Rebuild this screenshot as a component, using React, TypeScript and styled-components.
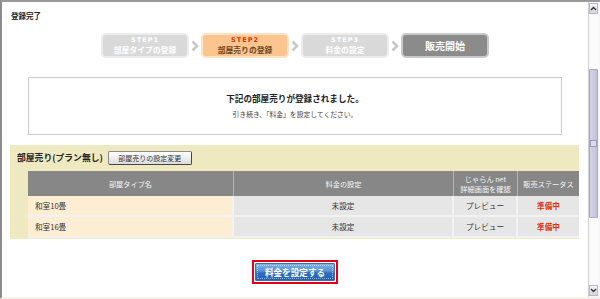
import React from "react";
import styled, { createGlobalStyle } from "styled-components";

const GlobalStyle = createGlobalStyle`
  html, body {
    margin: 0;
    padding: 0;
    background: #fff;
  }
  body {
    font-family: "Noto Sans CJK JP", "Noto Sans", sans-serif;
    color: #333;
  }
`;

const Frame = styled.div`
  width: 600px;
  height: 299px;
  box-sizing: border-box;
  border-top: 2px solid #9a9a9a;
  border-left: 2px solid #8c8c8c;
  border-bottom: 2px solid #f2f2ea;
  display: flex;
  overflow: hidden;
`;

const Main = styled.div`
  flex: 1;
  min-width: 0;
  display: flex;
  flex-direction: column;
`;

const PageTitle = styled.h1`
  margin: 0;
  padding: 7px 0 0 9px;
  font-size: 7.5px;
  line-height: 14px;
  font-weight: bold;
  color: #222;
`;

const Steps = styled.div`
  display: flex;
  justify-content: center;
  align-items: center;
  gap: 2px;
  margin-top: 10px;
`;

type StepKind = "off" | "on" | "end";

const stepColors: Record<StepKind, { bg: string; border: string; label: string; name: string }> = {
  off: { bg: "#d9d9d9", border: "#ececec", label: "#fff", name: "#fff" },
  on: { bg: "#fcc48e", border: "#fde2c4", label: "#d5380c", name: "#6b4420" },
  end: { bg: "#8b8b8b", border: "#c9c9c9", label: "#fff", name: "#fff" },
};

const StepBox = styled.div<{ $kind: StepKind }>`
  width: 88px;
  height: 25px;
  box-sizing: border-box;
  border-radius: 5px;
  border: 2px solid ${(p) => stepColors[p.$kind].border};
  background: ${(p) => stepColors[p.$kind].bg};
  display: flex;
  flex-direction: column;
  align-items: center;
  justify-content: center;
  gap: 1px;
`;

const StepLabel = styled.span<{ $kind: StepKind }>`
  font-family: "DejaVu Sans", sans-serif;
  font-size: 6.5px;
  line-height: 8px;
  font-weight: bold;
  letter-spacing: 1px;
  color: ${(p) => stepColors[p.$kind].label};
`;

const StepName = styled.span<{ $kind: StepKind; $big?: boolean }>`
  font-size: ${(p) => (p.$big ? "10px" : "7.8px")};
  line-height: ${(p) => (p.$big ? "14px" : "10px")};
  font-weight: bold;
  color: ${(p) => stepColors[p.$kind].name};
`;

const Chevron = () => (
  <svg width="8" height="12" viewBox="0 0 8 12">
    <polyline
      points="1.5,1.5 6,6 1.5,10.5"
      fill="none"
      stroke="#c8c8c8"
      strokeWidth="2.6"
    />
  </svg>
);

const MessageBox = styled.div`
  margin: 19px 26px 0;
  height: 58px;
  box-sizing: border-box;
  border: 1px solid #cccccc;
  padding-top: 13px;
  text-align: center;
`;

const MessageTitle = styled.p`
  margin: 0;
  font-size: 8.6px;
  line-height: 14px;
  font-weight: bold;
  color: #222;
`;

const MessageText = styled.p`
  margin: 3px 0 0;
  font-size: 6.8px;
  line-height: 12px;
  color: #444;
`;

const Section = styled.div`
  margin: 10px 9px 0 8px;
  background: #efe9c2;
  padding: 6px 0 1px;
`;

const SectionHead = styled.div`
  display: flex;
  align-items: center;
  gap: 5px;
  padding-left: 7px;
  height: 14px;
`;

const SectionTitle = styled.h2`
  margin: 0;
  font-size: 8.8px;
  line-height: 14px;
  font-weight: bold;
  color: #222;
`;

const SmallButton = styled.button`
  width: 84px;
  height: 14px;
  padding: 0;
  box-sizing: border-box;
  border: 1px solid #8a8a8a;
  border-right-color: #444;
  border-bottom-color: #444;
  border-radius: 2px;
  background: linear-gradient(#ffffff, #dcdcdc);
  font-family: inherit;
  font-size: 7px;
  line-height: 12px;
  color: #333;
`;

const Table = styled.table`
  margin: 6px 0 0 18px;
  width: 551px;
  table-layout: fixed;
  border-collapse: separate;
  border-spacing: 0;
`;

const HeadCell = styled.th`
  height: 25px;
  padding: 0;
  background: #878787;
  color: #f4f4f4;
  font-size: 7.2px;
  line-height: 10px;
  font-weight: normal;
  text-align: center;
  border-right: 1px solid #b4b4b4;
  &:last-child {
    border-right: none;
  }
`;

const Cell = styled.td<{ $name?: boolean; $status?: boolean }>`
  height: 19px;
  padding: 0 ${(p) => (p.$name ? "7px" : "0")};
  background: ${(p) => (p.$name ? "#fdedd3" : "#e6e6e6")};
  border-right: 2px solid #f2f2f2;
  border-bottom: 2px solid #f2f2f2;
  font-size: 7.6px;
  line-height: 12px;
  text-align: ${(p) => (p.$name ? "left" : "center")};
  color: ${(p) => (p.$status ? "#e03000" : "#333")};
  font-weight: ${(p) => (p.$status ? "bold" : "normal")};
  &:last-child {
    border-right: none;
  }
`;

const ActionRow = styled.div`
  display: flex;
  justify-content: center;
  margin-top: 21px;
`;

const ActionFrame = styled.div`
  border: 2px solid #e60012;
  padding: 1px;
`;

const BlueButton = styled.button`
  display: block;
  width: 80px;
  height: 18px;
  padding: 0;
  border: 1px solid #3a70b0;
  border-radius: 1px;
  background: linear-gradient(#7db2e6 0%, #5593d6 45%, #2f6fbe 55%, #2262b2 100%);
  color: #fff;
  font-family: inherit;
  font-size: 8.6px;
  line-height: 16px;
  font-weight: bold;
  outline: 1px dotted rgba(255, 255, 255, 0.5);
  outline-offset: -3px;
`;

const Scrollbar = styled.div`
  width: 12px;
  box-sizing: border-box;
  border-left: 1px solid #d0d0d0;
  padding-right: 2px;
  display: flex;
  flex-direction: column;
  background: #f8f8f8;
`;

const ScrollButton = styled.div`
  height: 11px;
  margin: 1px 0;
  box-sizing: border-box;
  border: 1px solid #b8b8c8;
  background: linear-gradient(#f6f6fa, #d6d6e2);
  display: flex;
  align-items: center;
  justify-content: center;
`;

const Track = styled.div`
  flex: 1;
  display: flex;
  flex-direction: column;
  background: #fbfbfb;
`;

const Thumb = styled.div`
  margin-top: 54px;
  height: 149px;
  box-sizing: border-box;
  border: 1px solid #a9a9c6;
  border-radius: 1px;
  background: linear-gradient(90deg, #d4d4e6, #c2c2da);
  display: flex;
  align-items: center;
  justify-content: center;
`;

const Grip = styled.div`
  width: 5px;
  height: 5px;
  border: 1px solid #9c9cba;
  background: #dcdcea;
`;

const ScrollArrow = ({ up }: { up?: boolean }) => (
  <svg width="7" height="5" viewBox="0 0 7 5">
    <polyline
      points={up ? "1,4 3.5,1.5 6,4" : "1,1 3.5,3.5 6,1"}
      fill="none"
      stroke="#333"
      strokeWidth="1.4"
    />
  </svg>
);

const rooms = ["和室10畳", "和室16畳"];

export default function App() {
  return (
    <>
      <GlobalStyle />
      <Frame>
        <Main>
          <PageTitle>登録完了</PageTitle>

          <Steps>
            <StepBox $kind="off">
              <StepLabel $kind="off">STEP1</StepLabel>
              <StepName $kind="off">部屋タイプの登録</StepName>
            </StepBox>
            <Chevron />
            <StepBox $kind="on">
              <StepLabel $kind="on">STEP2</StepLabel>
              <StepName $kind="on">部屋売りの登録</StepName>
            </StepBox>
            <Chevron />
            <StepBox $kind="off">
              <StepLabel $kind="off">STEP3</StepLabel>
              <StepName $kind="off">料金の設定</StepName>
            </StepBox>
            <Chevron />
            <StepBox $kind="end">
              <StepName $kind="end" $big>
                販売開始
              </StepName>
            </StepBox>
          </Steps>

          <MessageBox>
            <MessageTitle>下記の部屋売りが登録されました。</MessageTitle>
            <MessageText>引き続き、「料金」を設定してください。</MessageText>
          </MessageBox>

          <Section>
            <SectionHead>
              <SectionTitle>部屋売り(プラン無し)</SectionTitle>
              <SmallButton>部屋売りの設定変更</SmallButton>
            </SectionHead>
            <Table>
              <colgroup>
                <col style={{ width: 206 }} />
                <col style={{ width: 220 }} />
                <col style={{ width: 64 }} />
                <col style={{ width: 61 }} />
              </colgroup>
              <thead>
                <tr>
                  <HeadCell>部屋タイプ名</HeadCell>
                  <HeadCell>料金の設定</HeadCell>
                  <HeadCell>
                    じゃらん net
                    <br />
                    詳細画面を確認
                  </HeadCell>
                  <HeadCell>販売ステータス</HeadCell>
                </tr>
              </thead>
              <tbody>
                {rooms.map((r) => (
                  <tr key={r}>
                    <Cell $name>{r}</Cell>
                    <Cell>未設定</Cell>
                    <Cell>プレビュー</Cell>
                    <Cell $status>準備中</Cell>
                  </tr>
                ))}
              </tbody>
            </Table>
          </Section>

          <ActionRow>
            <ActionFrame>
              <BlueButton>料金を設定する</BlueButton>
            </ActionFrame>
          </ActionRow>
        </Main>

        <Scrollbar>
          <ScrollButton>
            <ScrollArrow up />
          </ScrollButton>
          <Track>
            <Thumb>
              <Grip />
            </Thumb>
          </Track>
          <ScrollButton>
            <ScrollArrow />
          </ScrollButton>
        </Scrollbar>
      </Frame>
    </>
  );
}
